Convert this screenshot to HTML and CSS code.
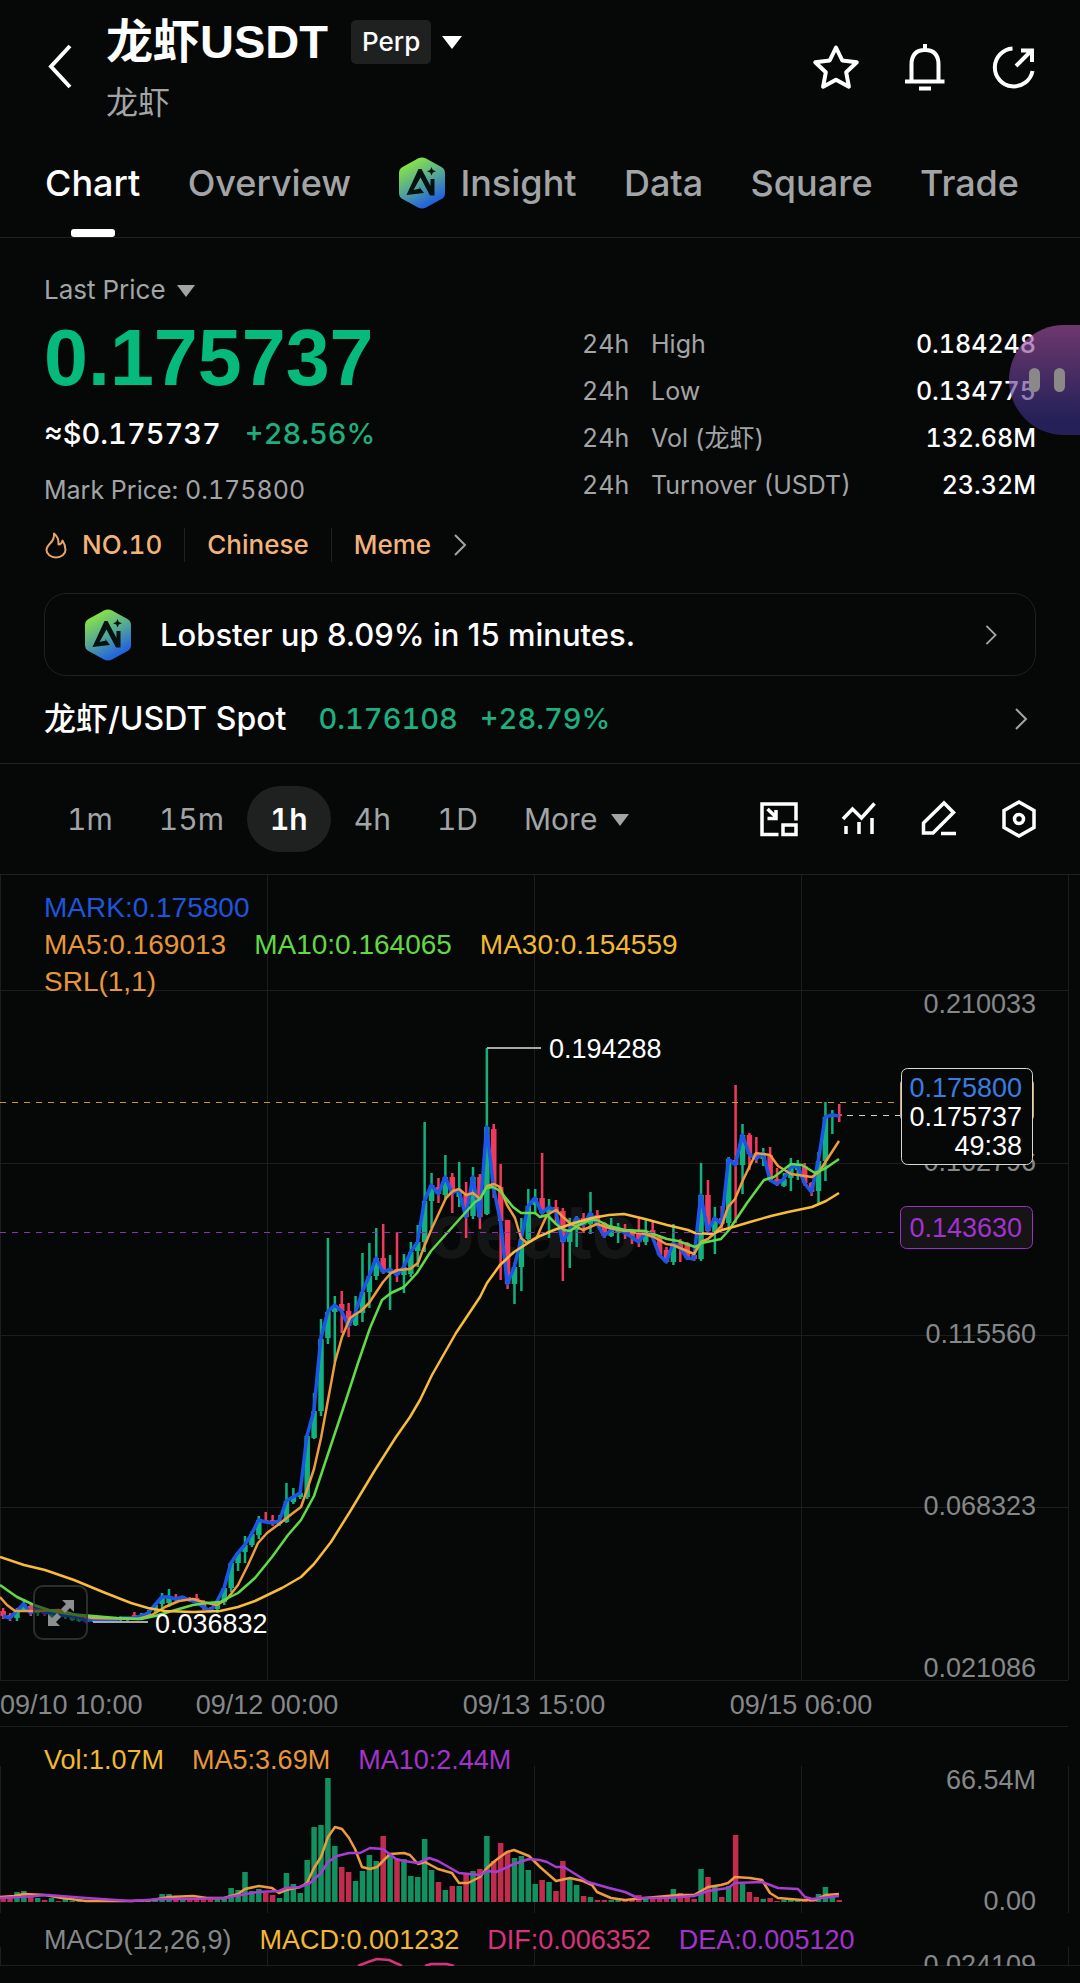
FILE: index.html
```html
<!DOCTYPE html>
<html lang="en">
<head>
    <meta charset="UTF-8">
    <meta name="viewport" content="width=device-width, initial-scale=1.0">
    <title>龙虾USDT Perp</title>
    <link rel="stylesheet" href="styles.css">
</head>
<body>
    <svg class="defs" width="0" height="0" aria-hidden="true">
        <defs>
            <linearGradient id="aiFill" x1="0.2" y1="0" x2="0.7" y2="1">
                <stop offset="0.1" stop-color="#86e04a"/>
                <stop offset="0.5" stop-color="#56a894"/>
                <stop offset="0.9" stop-color="#2465dc"/>
            </linearGradient>
            <symbol id="aiLogo" viewBox="0 0 48 52">
                <path d="M20 1.500Q24 -0.500 28 1.500L43.500 10Q47 12 47 16V36Q47 40 43.500 42L28 50.500Q24 52.500 20 50.500L4.500 42Q1 40 1 36V16Q1 12 4.500 10Z" fill="url(#aiFill)"/>
                <path d="M8.500 38L20.500 12H23.500L32.500 29V22H36.500V38.500H32L22.500 20.500L15.500 33L22 31.500L20.500 29L26 36Z" fill="#06120f"/>
                <path d="M33.500 10L34.800 13L38 14.300L34.800 15.600L33.500 18.600L32.200 15.600L29 14.300L32.200 13Z" fill="#06120f"/>
            </symbol>
            <symbol id="chevron" viewBox="0 0 14 24">
                <path d="M2 2L12 12L2 22" fill="none" stroke="#a2a4a6" stroke-width="2"/>
            </symbol>
        </defs>
    </svg>

    <header class="topbar">
        <button class="icon-btn back" aria-label="Back">
            <svg width="28" height="46" viewBox="0 0 28 46"><path d="M26 3L7 23.500L26 44" fill="none" stroke="#fff" stroke-width="4"/></svg>
        </button>
        <div class="pair">
            <div class="pair-row">
                <h1>龙虾USDT</h1>
                <span class="badge">Perp</span>
                <button class="icon-btn" aria-label="Select pair"><span class="caret white"></span></button>
            </div>
            <div class="pair-sub">龙虾</div>
        </div>
        <div class="topbar-icons">
            <button class="icon-btn" aria-label="Favorite">
                <svg width="48" height="48" viewBox="0 0 48 48"><path d="M24 4.500L30.300 17.500L44.800 19.300L34.200 29.300L36.900 43.700L24 36.700L11.100 43.700L13.800 29.300L3.200 19.300L17.700 17.500Z" fill="none" stroke="#fff" stroke-width="4" stroke-linejoin="round"/></svg>
            </button>
            <button class="icon-btn" aria-label="Alerts">
                <svg width="48" height="48" viewBox="0 0 48 48"><path d="M24 1V6M10.500 38V21.500Q10.500 7 24 7Q37.500 7 37.500 21.500V38M4 38.500H43.500M18 45.500H30" fill="none" stroke="#fff" stroke-width="4"/></svg>
            </button>
            <button class="icon-btn" aria-label="Share">
                <svg width="48" height="48" viewBox="0 0 48 48"><path d="M22.500 5.500A19 19 0 1 0 42.500 28" fill="none" stroke="#fff" stroke-width="4"/><path d="M26 23L41 8M31 7.500H42V19" fill="none" stroke="#fff" stroke-width="4"/></svg>
            </button>
        </div>
    </header>

    <nav class="tabs">
        <a class="active" href="#chart">Chart</a>
        <a href="#overview">Overview</a>
        <a href="#insight"><svg width="48" height="52"><use href="#aiLogo"/></svg>Insight</a>
        <a href="#data">Data</a>
        <a href="#square">Square</a>
        <a href="#trade">Trade</a>
    </nav>

    <main>
        <section class="quote">
            <div class="quote-grid">
                <div class="last">
                    <button class="last-label">Last Price <span class="caret grey"></span></button>
                    <div class="last-price">0.175737</div>
                    <div class="last-fiat"><span>≈$0.175737</span><span class="up">+28.56%</span></div>
                    <div class="mark">Mark Price: 0.175800</div>
                </div>
                <table class="stats">
                    <tbody>
                        <tr><td>24h</td><th>High</th><td class="num">0.184248</td></tr>
                        <tr><td>24h</td><th>Low</th><td class="num">0.134775</td></tr>
                        <tr><td>24h</td><th>Vol (龙虾)</th><td class="num">132.68M</td></tr>
                        <tr><td>24h</td><th>Turnover (USDT)</th><td class="num">23.32M</td></tr>
                    </tbody>
                </table>
            </div>

            <div class="tags">
                <a href="#rank"><svg width="24" height="28" viewBox="0 0 24 28"><path d="M10 2.500Q10.500 8 6.500 12Q2.500 16 2.500 19A9.500 7.500 0 0 0 12 26.500A9.500 7.500 0 0 0 21.500 19Q21.500 14 18.500 9.500Q17.500 13.500 14.500 13.500Q15 6.500 10 2.500Z" fill="none" stroke="#e8a468" stroke-width="2" stroke-linejoin="round"/></svg>NO.10</a>
                <a href="#chinese">Chinese</a>
                <a href="#meme">Meme</a>
                <svg width="14" height="24"><use href="#chevron"/></svg>
            </div>

            <a class="ai-banner" href="#signal">
                <svg width="48" height="52"><use href="#aiLogo"/></svg>
                <span>Lobster up 8.09% in 15 minutes.</span>
                <svg class="go" width="14" height="22"><use href="#chevron"/></svg>
            </a>

            <a class="spot" href="#spot">
                <span class="spot-name">龙虾/USDT Spot</span>
                <span class="up">0.176108</span>
                <span class="up">+28.79%</span>
                <svg class="go" width="14" height="24"><use href="#chevron"/></svg>
            </a>
        </section>

        <section class="toolbar">
            <div class="intervals">
                <button>1m</button>
                <button>15m</button>
                <button class="active">1h</button>
                <button>4h</button>
                <button>1D</button>
                <button>More <span class="caret grey"></span></button>
            </div>
            <div class="tools">
                <button class="icon-btn" aria-label="Mini window">
                    <svg width="40" height="40" viewBox="0 0 40 40"><path d="M19.500 35.500H3V5H37V21.500M24 26H37V35.500H24ZM8.500 10L17 18M17 11V19.500H8.500" fill="none" stroke="#fff" stroke-width="3.500"/></svg>
                </button>
                <button class="icon-btn" aria-label="Indicators">
                    <svg width="40" height="40" viewBox="0 0 40 40"><path d="M4 20L13.500 10L22.500 19L35.500 4.500M7 27V35M20 23V35M33 19V35" fill="none" stroke="#fff" stroke-width="3.500"/></svg>
                </button>
                <button class="icon-btn" aria-label="Draw">
                    <svg width="40" height="40" viewBox="0 0 40 40"><path d="M4.500 34V24L25 4L34.500 13.500L14 34ZM22 34.500H37" fill="none" stroke="#fff" stroke-width="3.500"/></svg>
                </button>
                <button class="icon-btn" aria-label="Chart settings">
                    <svg width="40" height="40" viewBox="0 0 40 40"><path d="M20 3L35 11.500V28.500L20 37L5 28.500V11.500Z" fill="none" stroke="#fff" stroke-width="3.500"/><circle cx="20" cy="20" r="4.500" fill="none" stroke="#fff" stroke-width="3.500"/></svg>
                </button>
            </div>
        </section>

        <section class="panel">
            <svg id="priceChart" class="chart" viewBox="0 875 1080 852"></svg>
            <div class="legend">
                <div class="legend-row"><span class="blue">MARK:0.175800</span></div>
                <div class="legend-row"><span class="orange">MA5:0.169013</span><span class="green">MA10:0.164065</span><span class="yellow">MA30:0.154559</span></div>
                <div class="legend-row"><span class="orange">SRL(1,1)</span></div>
            </div>
            <button class="expand" aria-label="Full screen">
                <svg width="50" height="50" viewBox="0 0 50 50"><path d="M26 12H38V24L34 20L29 25L25 21L30 16ZM24 38H12V26L16 30L21 25L25 29L20 34Z" fill="#8c8e8f"/></svg>
            </button>
        </section>

        <section class="panel">
            <svg id="volumeChart" class="chart" viewBox="0 1727 1080 187"></svg>
            <div class="legend">
                <div class="legend-row"><span class="yellow">Vol:1.07M</span><span class="orange">MA5:3.69M</span><span class="purple">MA10:2.44M</span></div>
            </div>
        </section>

        <section class="panel">
            <svg id="macdChart" class="chart" viewBox="0 1914 1080 52"></svg>
            <div class="legend macd">
                <div class="legend-row"><span class="muted">MACD(12,26,9)</span><span class="yellow">MACD:0.001232</span><span class="pink">DIF:0.006352</span><span class="purple">DEA:0.005120</span></div>
            </div>
        </section>
    </main>

    <button class="assistant" aria-label="Assistant"><span></span><span></span></button>

    <script src="chart.js"></script>
</body>
</html>
```
FILE: styles.css
```css
* {
    box-sizing: border-box;
}
body {
    margin: 0;
    min-height: 100vh;
    position: relative;
    background-color: #060808;
    color: #fff;
    font-family: Inter, 'Noto Sans CJK SC', sans-serif;
    font-size: 26px;
    font-variant-numeric: tabular-nums;
    overflow-x: hidden;
}
a {
    color: inherit;
    text-decoration: none;
}
button {
    background: none;
    border: none;
    padding: 0;
    margin: 0;
    color: inherit;
    font: inherit;
    font-variant-numeric: tabular-nums;
    cursor: pointer;
}
svg {
    display: block;
    flex: none;
}
.defs {
    position: absolute;
}
.up {
    color: #1fae7d;
}
.caret {
    display: inline-block;
    border-left: 9px solid transparent;
    border-right: 9px solid transparent;
    border-top: 12px solid;
}
.caret.white {
    color: #fff;
    border-left-width: 10px;
    border-right-width: 10px;
    border-top-width: 13px;
}
.caret.grey {
    color: #a2a4a6;
}

/* Header */
.topbar {
    display: flex;
    align-items: flex-start;
    padding: 14px 42px 0 44px;
}
.icon-btn {
    display: flex;
    align-items: center;
}
.back {
    width: 62px;
    margin-top: 29px;
}
.pair {
    flex: 1;
}
.pair-row {
    display: flex;
    align-items: center;
    height: 56px;
}
h1 {
    margin: 0 23px 0 0;
    font-family: 'Liberation Sans', 'Noto Sans CJK SC', sans-serif;
    font-size: 47px;
    line-height: 56px;
    font-weight: bold;
}
.badge {
    padding: 0 11px;
    margin-right: 11px;
    line-height: 44px;
    border-radius: 5px;
    background-color: #1f2121;
    font-size: 26px;
    font-weight: 500;
}
.pair-sub {
    margin-top: 13px;
    line-height: 40px;
    font-size: 32px;
    color: #a2a4a6;
}
.topbar-icons {
    display: flex;
    gap: 41px;
    margin-top: 29px;
}

/* Tabs */
.tabs {
    display: flex;
    justify-content: space-between;
    padding: 34px 61px 0 45px;
    border-bottom: 1px solid #1f2121;
    font-size: 36px;
    font-weight: 500;
    line-height: 52px;
    color: #a2a4a6;
}
.tabs a {
    position: relative;
    display: flex;
    align-items: center;
    gap: 14px;
    padding-bottom: 28px;
}
.tabs .active {
    color: #fff;
}
.tabs .active::after {
    content: "";
    position: absolute;
    left: 50%;
    bottom: 0;
    width: 44px;
    height: 8px;
    margin-left: -22px;
    border-radius: 3px;
    background-color: #fff;
}

/* Quote */
.quote {
    padding: 35px 44px 22px;
    border-bottom: 1px solid #1f2121;
}
.quote-grid {
    display: grid;
    grid-template-columns: 538fr 454fr;
}
.last-label, .mark {
    display: block;
    line-height: 34px;
    color: #a2a4a6;
}
.mark {
    font-size: 25px;
}
.last-label .caret {
    margin: 0 0 2px 4px;
}
.last-price {
    margin: 15px 0 20px;
    font-family: 'Liberation Sans', sans-serif;
    font-size: 79px;
    line-height: 72px;
    font-weight: bold;
    color: #06b97d;
}
.last-fiat {
    display: flex;
    gap: 24px;
    margin-bottom: 19px;
    font-size: 29px;
    line-height: 40px;
    font-weight: 500;
}
.stats {
    width: 100%;
    margin-top: 48px;
    border-collapse: collapse;
    align-self: start;
    font-size: 25px;
    line-height: 47px;
    color: #a2a4a6;
}
.stats td, .stats th {
    padding: 0;
    text-align: left;
    font-weight: normal;
    white-space: nowrap;
}
.stats td:first-child {
    width: 69px;
}
.stats .num {
    text-align: right;
    font-weight: 500;
    color: #fff;
}
.tags {
    display: flex;
    align-items: center;
    margin-top: 19px;
    line-height: 34px;
    font-weight: 500;
    color: #f3b27c;
}
.tags a {
    display: flex;
    align-items: center;
    gap: 14px;
}
.tags a + a {
    margin-left: 22px;
    padding-left: 22px;
    border-left: 1px solid #1f2121;
}
.tags a + svg {
    margin-left: 22px;
}
.ai-banner, .spot {
    display: flex;
    align-items: center;
    font-size: 31px;
    font-weight: 500;
}
.ai-banner {
    gap: 28px;
    height: 83px;
    margin-top: 31px;
    padding: 0 37px 0 39px;
    border: 1px solid #1f2121;
    border-radius: 22px;
    font-variant-numeric: normal;
}
.go {
    margin-left: auto;
}
.spot {
    gap: 22px;
    margin-top: 21px;
    padding-right: 8px;
    font-size: 29px;
    line-height: 44px;
}
.spot-name {
    margin-right: 10px;
    font-size: 32px;
}

/* Toolbar */
.toolbar {
    display: flex;
    align-items: center;
    justify-content: space-between;
    padding: 22px 41px 22px 44px;
    border-bottom: 1px solid #1f2121;
}
.intervals {
    display: flex;
}
.intervals button {
    padding: 0 23px;
    border-radius: 33px;
    font-size: 30px;
    line-height: 66px;
    color: #a2a4a6;
}
.intervals .active {
    background-color: #1f2121;
    color: #fff;
    font-weight: 600;
}
.intervals .caret {
    margin: 0 0 4px 6px;
}
.tools {
    display: flex;
    gap: 40px;
}

/* Chart panels */
.panel {
    position: relative;
}
.chart {
    width: 100%;
    height: auto;
    font-family: 'Liberation Sans', sans-serif;
    font-size: 27px;
}
.legend {
    position: absolute;
    top: 14px;
    left: 44px;
    font-family: 'Liberation Sans', sans-serif;
    font-size: 28px;
    line-height: 37px;
}
.legend-row {
    display: flex;
    gap: 28px;
}
.panel + .panel .legend {
    top: 15px;
    font-size: 27px;
}
.panel + .panel .macd {
    top: 8px;
}
.blue { color: #1f55dc; }
.orange { color: #e8963c; }
.green { color: #62d844; }
.yellow { color: #f2b834; }
.purple { color: #a233cc; }
.pink { color: #d6337c; }
.muted { color: #858788; }
.expand {
    position: absolute;
    left: 33px;
    bottom: 87px;
    width: 55px;
    height: 55px;
    display: flex;
    align-items: center;
    justify-content: center;
    border: 2px solid rgba(60, 63, 64, 0.7);
    border-radius: 10px;
    background-color: rgba(6, 8, 8, 0.5);
}

/* Chart marks */
.grid { stroke: #1c1e1e; stroke-width: 1; }
.axis { fill: #858788; }
.wm { fill: #141616; font-family: Inter, sans-serif; font-size: 76px; font-weight: bold; }
.up-fill { fill: #12b180; }
.down-fill { fill: #ef3a5c; }
.vol .up-fill { fill: #129060; }
.vol .down-fill { fill: #c02c4c; }
.line { fill: none; stroke-width: 2.5; stroke-linejoin: round; }
.line.mark-line { stroke: #1a56e8; stroke-width: 3.5; }
.ma5 { stroke: #f09a3e; }
.ma10 { stroke: #62dc46; }
.ma30 { stroke: #f8bc3a; }
.vma10 { stroke: #a83cd4; }
.dif { stroke: #d6337c; }
.dash { stroke-width: 1; stroke-dasharray: 6 6; }
.dash-orange { stroke: #c8963c; }
.dash-purple { stroke: #8a32b0; }
.dash-white { stroke: #d0d0d0; }
.pointer { stroke: #a6a8a8; stroke-width: 2; }
.label { fill: #fff; }
.tag { fill: #060808; stroke: #d8d8d8; stroke-width: 1; }
.tag-back { fill: none; stroke: #c8a45c; stroke-width: 2; }
.tag-purple { fill: #161416; stroke: #9a30c4; stroke-width: 1; }
.tag-blue-text { fill: #3a7ce0; }
.tag-purple-text { fill: #a233cc; }

/* Floating assistant */
.assistant {
    position: absolute;
    top: 325px;
    right: 0;
    width: 71px;
    height: 110px;
    display: flex;
    align-items: center;
    justify-content: center;
    gap: 14px;
    padding-left: 4px;
    border-radius: 55px 0 0 55px;
    background: linear-gradient(rgba(170, 84, 170, 0.63), rgba(55, 48, 135, 0.63) 85%);
}
.assistant span {
    width: 11px;
    height: 24px;
    border-radius: 6px;
    background-color: #8a8888;
}
```
FILE: chart.js
```javascript
// Hourly candles, newest first: [high, top, bottom, low, direction, volume], in chart units
const candles = [
    [1104,1114,1116,1122,0,2],[1110,1115,1117,1134,1,5],[1102,1117,1161,1181,1,15],[1152,1161,1191,1204,1,8],
    [1182,1183,1192,1196,0,2],[1163,1166,1183,1186,0,1],[1160,1166,1170,1180,1,2],[1158,1167,1178,1191,1,2],
    [1173,1179,1186,1187,1,2],[1168,1179,1184,1186,0,1],[1147,1155,1180,1182,0,4],[1148,1153,1159,1166,1,3],
    [1137,1153,1159,1163,0,5],[1133,1135,1154,1170,0,10],[1124,1135,1165,1194,1,18],[1085,1160,1165,1223,0,67],
    [1157,1159,1223,1227,1,16],[1206,1218,1224,1230,0,5],[1207,1218,1232,1254,1,16],[1180,1195,1231,1235,0,25],
    [1163,1195,1259,1261,1,33],[1252,1255,1259,1261,0,3],[1242,1243,1258,1260,0,5],[1239,1243,1248,1262,0,9],
    [1224,1243,1262,1265,1,13],[1247,1250,1262,1263,0,5],[1235,1237,1255,1256,0,6],[1220,1230,1237,1238,0,4],
    [1220,1233,1242,1245,1,4],[1218,1233,1242,1247,0,7],[1230,1232,1237,1244,0,3],[1224,1231,1233,1239,0,2],
    [1223,1228,1233,1243,1,2],[1218,1230,1236,1237,1,2],[1222,1223,1236,1238,0,2],[1210,1215,1224,1226,0,2],
    [1192,1213,1224,1234,1,5],[1213,1218,1225,1233,0,6],[1216,1218,1230,1247,1,17],[1218,1230,1242,1268,1,23],
    [1208,1211,1242,1281,0,41],[1200,1207,1211,1222,0,11],[1199,1207,1213,1238,1,20],[1153,1198,1213,1217,0,22],
    [1189,1198,1205,1213,1,18],[1189,1206,1239,1243,1,32],[1218,1239,1267,1291,1,46],[1263,1267,1284,1304,1,44],
    [1220,1220,1284,1289,0,50],[1164,1187,1221,1280,0,59],[1124,1129,1188,1198,0,41],[1048,1127,1214,1215,1,66],
    [1174,1177,1217,1229,0,33],[1167,1177,1216,1219,1,31],[1182,1195,1217,1238,0,29],[1162,1190,1197,1207,1,16],
    [1173,1177,1193,1213,0,16],[1155,1177,1195,1200,1,12],[1178,1187,1194,1203,0,20],[1173,1185,1201,1228,1,32],
    [1122,1201,1242,1252,1,63],[1225,1242,1251,1267,1,25],[1242,1252,1274,1277,1,26],[1254,1267,1275,1293,1,43],
    [1232,1269,1275,1282,0,43],[1255,1269,1273,1310,1,48],[1224,1258,1272,1274,0,66],[1228,1258,1276,1280,1,41],
    [1243,1276,1292,1308,1,47],[1253,1292,1313,1322,1,31],[1296,1313,1325,1326,1,21],[1303,1311,1326,1337,0,30],
    [1291,1304,1311,1333,0,35],[1296,1305,1312,1362,1,56],[1238,1312,1338,1344,1,124],[1319,1339,1411,1416,1,77],
    [1393,1411,1438,1439,1,75],[1433,1436,1497,1499,1,42],[1487,1493,1497,1499,1,9],[1488,1497,1502,1504,1,18],
    [1483,1501,1522,1523,1,29],[1515,1521,1524,1526,1,4],[1515,1520,1523,1526,0,7],[1512,1520,1522,1523,0,9],
    [1516,1520,1535,1539,1,13],[1531,1534,1545,1547,1,11],[1536,1545,1552,1563,1,30],[1552,1553,1563,1571,1,12],
    [1562,1563,1588,1592,1,14],[1587,1588,1602,1605,1,4],[1599,1601,1609,1613,1,4],[1607,1608,1611,1612,0,3],
    [1600,1602,1607,1610,0,3],[1594,1598,1602,1603,0,3],[1597,1598,1600,1602,0,3],[1596,1597,1599,1601,1,4],
    [1594,1597,1599,1601,0,4],[1589,1597,1603,1607,1,8],[1593,1597,1604,1608,1,8],[1603,1605,1610,1613,1,3],
    [1610,1613,1617,1618,1,2],[1613,1616,1618,1619,1,1],[1612,1615,1618,1619,0,1],[1617,1618,1620,1621,1,1],
    [1616,1618,1620,1621,1,1],[1617,1619,1621,1622,0,1],[1617,1619,1621,1622,1,2],[1617,1619,1621,1622,0,1],
    [1616,1619,1621,1622,1,1],[1616,1618,1621,1623,0,2],[1615,1617,1621,1622,1,1],[1613,1616,1620,1621,1,1],
    [1612,1615,1617,1619,1,3],[1610,1612,1616,1618,0,1],[1609,1612,1620,1621,1,4],[1609,1611,1613,1616,0,2],
    [1606,1608,1613,1616,1,4],[1604,1606,1613,1616,0,5],[1599,1604,1610,1612,1,11],[1608,1611,1618,1621,1,10],
    [1613,1615,1618,1621,0,4],[1608,1611,1616,1619,0,4]
];
const STEP = 6.91;
const LAST_X = 839;

const ma5 = '0,1597 7,1605 15,1611 34,1611 59,1610 76,1615 93,1618 138,1619 152,1615 165,1607 179,1601 193,1599 203,1602 217,1605 227,1599 238,1585 248,1565 258,1543 267,1533 279,1524 293,1513 301,1507 308,1487 314,1469 321,1438 328,1400 335,1362 342,1337 350,1318 362,1310 369,1303 383,1282 391,1273 398,1270 410,1269 418,1263 424,1247 432,1228 439,1213 446,1198 453,1191 459,1189 466,1195 473,1193 480,1199 487,1186 494,1184 500,1187 507,1205 515,1218 521,1238 527,1243 537,1237 540,1230 547,1215 556,1210 563,1217 571,1224 583,1230 597,1224 609,1228 625,1231 645,1234 654,1237 666,1244 673,1245 694,1254 701,1242 708,1239 716,1232 722,1225 728,1207 735,1199 743,1180 756,1153 770,1155 778,1166 791,1174 812,1177 819,1172 839,1141';
const ma10 = '0,1585 17,1597 34,1605 52,1611 69,1614 93,1616 117,1618 141,1619 155,1616 172,1611 193,1605 207,1603 220,1602 238,1593 255,1578 272,1557 288,1535 301,1520 314,1496 327,1457 337,1427 346,1400 358,1363 370,1328 382,1300 391,1293 404,1287 417,1273 431,1251 448,1232 465,1213 475,1202 480,1199 486,1188 493,1187 500,1191 513,1207 521,1213 535,1213 540,1217 547,1215 556,1224 564,1230 570,1231 577,1226 590,1220 597,1220 609,1226 625,1230 645,1231 667,1239 678,1241 695,1247 702,1243 721,1239 729,1230 747,1203 764,1180 774,1177 791,1164 802,1165 815,1173 826,1168 839,1159';
const ma30 = '0,1557 24,1565 45,1570 74,1580 103,1592 131,1603 148,1608 165,1611 193,1612 220,1611 238,1607 255,1601 282,1588 301,1577 314,1564 331,1542 351,1510 375,1470 396,1437 410,1417 420,1400 432,1375 456,1333 480,1297 487,1283 500,1265 514,1252 528,1243 540,1236 554,1230 574,1223 592,1218 609,1215 624,1214 645,1219 667,1225 688,1230 695,1233 712,1234 722,1230 733,1227 750,1222 771,1216 788,1212 812,1207 826,1201 839,1193';
const vma5 = '0,1897 14,1896 24,1894 45,1895 62,1898 86,1901 131,1901 152,1900 169,1897 193,1896 207,1898 224,1898 238,1894 245,1889 259,1886 272,1888 279,1893 286,1890 300,1887 307,1883 314,1868 321,1857 328,1837 335,1827 342,1829 349,1838 355,1849 362,1867 370,1869 377,1867 390,1854 404,1853 410,1855 418,1864 425,1862 438,1869 452,1873 459,1883 468,1883 480,1877 487,1868 496,1860 507,1852 514,1850 529,1856 540,1867 556,1881 570,1878 583,1881 592,1885 597,1892 611,1898 625,1900 645,1898 678,1895 694,1895 708,1887 721,1885 728,1883 735,1877 750,1878 762,1880 770,1893 778,1898 802,1900 815,1900 826,1895 839,1894';
const vma10 = '0,1898 21,1897 48,1895 86,1898 131,1901 162,1899 193,1899 224,1898 241,1895 258,1892 279,1891 286,1888 300,1887 310,1883 321,1873 328,1862 337,1856 349,1853 360,1853 370,1848 383,1849 396,1859 404,1861 418,1863 429,1858 438,1861 459,1873 480,1875 487,1871 496,1872 514,1864 529,1859 540,1860 547,1862 556,1867 564,1867 588,1882 609,1888 625,1892 638,1898 666,1898 694,1896 708,1891 728,1888 735,1883 762,1882 778,1888 798,1889 805,1897 812,1899 839,1896';

const line = (x1, y1, x2, y2, cls) => `<line x1="${x1}" y1="${y1}" x2="${x2}" y2="${y2}" class="${cls}"/>`;
const rect = (x, y, w, h, cls, rx = 0) => `<rect x="${x}" y="${y}" width="${w}" height="${h}" rx="${rx}" class="${cls}"/>`;
const text = (x, y, value, cls, anchor = 'start') => `<text x="${x}" y="${y}" text-anchor="${anchor}" class="${cls}">${value}</text>`;
const poly = (points, cls) => `<polyline points="${points}" class="line ${cls}"/>`;
const columns = (y1, y2) => [0.5, 267.5, 534.5, 801.5, 1068.5].map(x => line(x, y1, x, y2, 'grid')).join('');
const candleX = i => LAST_X - STEP * i;

// Price panel
let price = columns(875, 1680);
[990.5, 1163.5, 1335.5, 1507.5, 1680.5, 1726.5].forEach(y => {
    price += line(0, y, 1068, y, 'grid');
});
price += text(428, 1258, 'oeato', 'wm');
[['0.210033', 1013], ['0.162796', 1171], ['0.115560', 1343], ['0.068323', 1515], ['0.021086', 1677]].forEach(([value, y]) => {
    price += text(1036, y, value, 'axis', 'end');
});
price += text(0, 1714, '09/10 10:00', 'axis');
price += text(267, 1714, '09/12 00:00', 'axis', 'middle');
price += text(534, 1714, '09/13 15:00', 'axis', 'middle');
price += text(801, 1714, '09/15 06:00', 'axis', 'middle');

const closes = [];
candles.forEach(([high, top, bottom, low, rising], i) => {
    const x = candleX(i);
    const cls = rising ? 'up-fill' : 'down-fill';
    price += rect(x - 1, high, 2.5, low - high, cls);
    price += rect(x - 2.5, top, 5.5, Math.max(bottom - top, 1), cls);
    closes.push(`${x},${rising ? top : bottom}`);
});
price += poly(closes.join(' '), 'mark-line');
price += poly(ma5, 'ma5') + poly(ma10, 'ma10') + poly(ma30, 'ma30');
price += line(0, 1102.5, 895, 1102.5, 'dash dash-orange');
price += line(0, 1232.5, 895, 1232.5, 'dash dash-purple');
price += line(847, 1115.5, 901, 1115.5, 'dash dash-white');
price += line(487, 1048, 541, 1048, 'pointer') + text(549, 1058, '0.194288', 'label');
price += line(93, 1622, 148, 1622, 'pointer') + text(155, 1633, '0.036832', 'label');
price += rect(901, 1080, 132, 40, 'tag-back', 4);
price += rect(901.5, 1068.5, 131, 96, 'tag', 6);
price += text(1022, 1097, '0.175800', 'tag-blue-text', 'end');
price += text(1022, 1126, '0.175737', 'label', 'end');
price += text(1022, 1155, '49:38', 'label', 'end');
price += rect(900.5, 1206.5, 132, 42, 'tag-purple', 6);
price += text(1022, 1237, '0.143630', 'tag-purple-text', 'end');
document.getElementById('priceChart').innerHTML = price;

// Volume panel
let volume = columns(1766, 1913) + '<g class="vol">';
candles.forEach(([, , , , rising, size], i) => {
    volume += rect(candleX(i) - 2.5, 1902 - size, 5.5, size, rising ? 'up-fill' : 'down-fill');
});
volume += '</g>' + poly(vma5, 'ma5') + poly(vma10, 'vma10');
volume += text(1036, 1789, '66.54M', 'axis', 'end') + text(1036, 1910, '0.00', 'axis', 'end');
document.getElementById('volumeChart').innerHTML = volume;

// MACD panel, cut off by the bottom edge
let macd = columns(1947, 1965) + line(0, 1965.5, 1080, 1965.5, 'grid');
macd += poly('358,1966 368,1962 377,1959 389,1960 402,1966', 'dif');
macd += poly('425,1966 431,1964 447,1964 454,1966', 'dif');
macd += text(1036, 1974, '0.024109', 'axis', 'end');
document.getElementById('macdChart').innerHTML = macd;
```
